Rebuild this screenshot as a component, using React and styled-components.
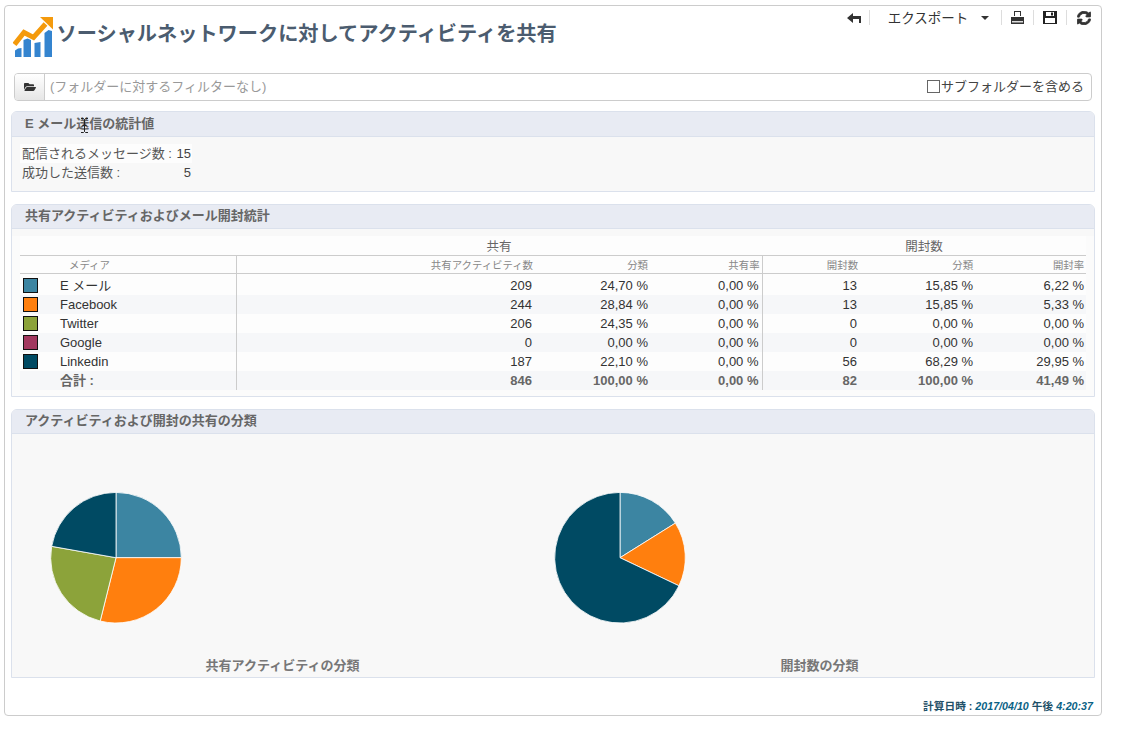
import React from 'react';
import styled, { createGlobalStyle } from 'styled-components';
import { FaFolderOpen, FaSyncAlt } from 'react-icons/fa';

const GlobalStyle = createGlobalStyle`
  html, body {
    margin: 0;
    background: #fff;
    font-family: "Liberation Sans", "Noto Sans CJK JP", sans-serif;
    font-size: 13px;
    color: #444;
  }
`;

const Page = styled.div`
  width: 1128px;
  height: 740px;
  padding: 5px 0 0 4px;
  box-sizing: border-box;
`;

const Card = styled.div`
  width: 1098px;
  height: 711px;
  box-sizing: border-box;
  border: 1px solid #ccc;
  border-radius: 4px;
  padding: 11px 6px 0 6px;
  display: flex;
  flex-direction: column;
  position: relative;
`;

const Header = styled.div`
  height: 56px;
  display: flex;
  align-items: flex-start;
  padding-left: 2px;
`;

const Title = styled.h1`
  margin: 4px 0 0 3.5px;
  font-size: 20.2px;
  line-height: 26px;
  font-weight: bold;
  color: #4b5c6f;
`;

const Toolbar = styled.div`
  position: absolute;
  top: 3px;
  right: 0;
  display: flex;
  align-items: center;
  height: 17px;
  color: #333;
`;

const ToolButton = styled.div`
  display: flex;
  align-items: center;
  justify-content: center;
  height: 15px;
  width: ${(p) => p.$w}px;
  box-sizing: border-box;
  border-right: ${(p) => (p.$last ? 'none' : '1px solid #ddd')};
`;

const ExportButton = styled(ToolButton)`
  padding: 0 0 2px 6px;
  font-size: 13.5px;
`;

const Caret = styled.span`
  width: 0;
  height: 0;
  margin: 2px 0 0 13px;
  border-left: 4px solid transparent;
  border-right: 4px solid transparent;
  border-top: 4px solid #333;
`;

const FilterBar = styled.div`
  margin-left: 3px;
  width: 1078px;
  height: 28px;
  box-sizing: border-box;
  border: 1px solid #ccc;
  border-radius: 4px;
  display: flex;
  align-items: center;
  font-size: 13px;
`;

const FolderButton = styled.div`
  width: 29px;
  height: 26px;
  flex: none;
  display: flex;
  align-items: center;
  justify-content: center;
  background: linear-gradient(#fff, #e6e6e6);
  border-right: 1px solid #ccc;
  border-radius: 3px 0 0 3px;
  color: #333;
  font-size: 12px;
`;

const FilterText = styled.span`
  flex: 1;
  padding: 0 0 3px 5px;
  color: #999;
`;

const Subfolder = styled.label`
  display: flex;
  align-items: center;
  padding: 0 7px 3px 0;
  color: #444;
`;

const Checkbox = styled.span`
  width: 11px;
  height: 11px;
  margin: 1px 1px 0 0;
  border: 1px solid #666;
  background: #fff;
`;

const Panel = styled.section`
  width: 1084px;
  margin-top: ${(p) => p.$top}px;
  box-sizing: border-box;
  border: 1px solid #dbe1ec;
  border-radius: 6px 6px 0 0;
  background: #f8f8f8;
  display: flex;
  flex-direction: column;
`;

const PanelTitle = styled.h2`
  margin: 0;
  height: ${(p) => p.$h || 24}px;
  flex: none;
  box-sizing: border-box;
  padding-left: 13px;
  background: #e8ebf3;
  border-bottom: 1px solid #dbe1ec;
  border-radius: 5px 5px 0 0;
  font-size: 13px;
  line-height: ${(p) => (p.$h || 24) - 2}px;
  font-weight: bold;
  color: #666;
`;

const TextCursor = styled.svg`
  position: absolute;
  left: 76px;
  top: 112px;
`;

const Stats = styled.dl`
  margin: 7px 0 9px 8px;
  width: 172px;
  display: grid;
  grid-template-columns: 1fr auto;
  grid-auto-rows: 19px;
  line-height: 19px;
  color: #555;
`;

const StatLabel = styled.dt`
  margin: 0;
  padding-left: 2px;
  background: ${(p) => (p.$hl ? '#fdfdfd' : 'transparent')};
`;

const StatValue = styled.dd`
  margin: 0;
  padding-right: 1px;
  text-align: right;
  color: #444;
  background: ${(p) => (p.$hl ? '#fdfdfd' : 'transparent')};
`;

const TableWrap = styled.div`
  padding: 7px 8px 6px 8px;
  background: linear-gradient(#f8f8f8 7px, #fbfbfb 7px);
`;

const Table = styled.table`
  width: 1066px;
  border-collapse: collapse;
  table-layout: fixed;
  background: #fdfdfd;
`;

const GroupCell = styled.th`
  height: 19px;
  padding: 0;
  font-size: 12.5px;
  font-weight: normal;
  color: #666;
  text-align: center;
  border-bottom: 1px solid #ccc;
  box-sizing: border-box;
`;

const ColHead = styled.th`
  height: 18px;
  padding: 0 ${(p) => p.$pad ?? 0}px 0 0;
  font-size: 10.4px;
  font-weight: normal;
  color: #888;
  text-align: ${(p) => p.$align || 'right'};
  border-bottom: 1px solid #ccc;
  border-right: ${(p) => (p.$rule ? '1px solid #ccc' : 'none')};
  box-sizing: border-box;
`;

const MediaHead = styled.span`
  margin-left: 49px;
`;

const Row = styled.tr`
  height: ${(p) => (p.$first ? 21 : 19)}px;
  background: ${(p) => (p.$alt ? '#f6f7f9' : '#fdfdfd')};
  color: ${(p) => (p.$total ? '#666' : '#333')};
  font-weight: ${(p) => (p.$total ? 'bold' : 'normal')};

  td {
    padding-top: ${(p) => (p.$first ? 3 : 0)}px;
  }
`;

const Cell = styled.td`
  padding: 0 ${(p) => p.$pad}px 0 0;
  text-align: right;
  font-size: 13px;
  line-height: 15px;
  border-right: ${(p) => (p.$rule ? '1px solid #ccc' : 'none')};
`;

const MediaCell = styled.td`
  padding: 0;
  border-right: 1px solid #ccc;
`;

const MediaInner = styled.div`
  display: flex;
  align-items: center;
  padding-left: 3px;
  font-size: 13px;
  line-height: 15px;
`;

const Swatch = styled.span`
  width: 13px;
  height: 13px;
  flex: none;
  border: 1px solid #111;
  background: ${(p) => p.$color};
  visibility: ${(p) => (p.$color ? 'visible' : 'hidden')};
`;

const MediaName = styled.span`
  margin-left: 22px;
`;

const Charts = styled.div`
  height: 243px;
  display: grid;
  grid-template-columns: 541px 541px;
`;

const ChartBox = styled.figure`
  margin: 0;
  display: flex;
  flex-direction: column;
  padding-top: 58px;
`;

const PieWrap = styled.div`
  margin-left: ${(p) => p.$left}px;
  height: 132px;
  flex: none;
`;

const Caption = styled.figcaption`
  margin-top: auto;
  margin-left: ${(p) => p.$shift}px;
  padding-bottom: 3px;
  text-align: center;
  font-size: 13px;
  line-height: 16px;
  font-weight: bold;
  color: #777;
`;

const Footer = styled.div`
  margin-top: 21px;
  width: 1082px;
  text-align: right;
  font-size: 10.7px;
  line-height: 14px;
  font-weight: bold;
  color: #1f5068;
`;

const FooterDate = styled.i`
  color: #0a6285;
`;

const COLORS = ['#3c85a2', '#ff7f0e', '#8ca33a', '#a1375f', '#004a63'];

const ROWS = [
  ['E メール', '209', '24,70 %', '0,00 %', '13', '15,85 %', '6,22 %'],
  ['Facebook', '244', '28,84 %', '0,00 %', '13', '15,85 %', '5,33 %'],
  ['Twitter', '206', '24,35 %', '0,00 %', '0', '0,00 %', '0,00 %'],
  ['Google', '0', '0,00 %', '0,00 %', '0', '0,00 %', '0,00 %'],
  ['Linkedin', '187', '22,10 %', '0,00 %', '56', '68,29 %', '29,95 %'],
];

const CELL_PADS = [1, 1, 3, 1, 1, 2];

// slice sizes in degrees, as drawn in the chart
const Pie = ({ degrees }) => {
  const r = 65.3;
  let angle = 0;
  return (
    <svg width="132" height="132" viewBox="-66 -65.7 132 132">
      {degrees.map((deg, i) => {
        if (!deg) return null;
        const start = (angle * Math.PI) / 180;
        angle += deg;
        const end = (angle * Math.PI) / 180;
        const large = deg > 180 ? 1 : 0;
        const d = `M0 0 L${r * Math.sin(start)} ${-r * Math.cos(start)} A${r} ${r} 0 ${large} 1 ${r * Math.sin(end)} ${-r * Math.cos(end)} Z`;
        return <path key={i} d={d} fill={COLORS[i]} stroke="#fff" strokeWidth="0.8" />;
      })}
    </svg>
  );
};

const Logo = () => (
  <svg width="40" height="41" viewBox="0 0 40 41">
    <g fill="#3484cf">
      <path d="M2 33.500l3-2 3.500-.5V40H2z" />
      <path d="M10.500 23l4-1.500 3.500 1.500V40h-7.500z" />
      <path d="M21.500 26l6-1V40h-6z" />
      <path d="M31.500 16l4-3 3.500 1V40h-7.500z" />
    </g>
    <path d="M1.500 27.500L11 15.500l9.500 5L32.500 7" fill="none" stroke="#f49a0c" strokeWidth="5" />
    <path d="M27 0H40V12.500z" fill="#f49a0c" />
  </svg>
);

const BackIcon = () => (
  <svg width="14" height="10" viewBox="0 0 14 10">
    <path d="M0 5L6 0v3h8v7h-2V6H6v4z" fill="#333" />
  </svg>
);

const PrintIcon = () => (
  <svg width="13" height="13" viewBox="0 0 13 13">
    <path d="M3 0h7v5H9V1H4v4H3z M0 6h13v7H0z" fill="#333" />
    <path d="M1 10h11v1.500H1z" fill="#ddd" />
  </svg>
);

const SaveIcon = () => (
  <svg width="14" height="13" viewBox="0 0 14 13">
    <path fillRule="evenodd" d="M0 0h14v13H0z M3 1v4h8V1z M2 7v5h10V7z" fill="#222" />
    <path d="M8 1.500h2v3H8z" fill="#222" />
  </svg>
);

export default function App() {
  return (
    <Page>
      <GlobalStyle />
      <Card>
        <Toolbar>
          <ToolButton $w={32}><BackIcon /></ToolButton>
          <ExportButton $w={132}>エクスポート<Caret /></ExportButton>
          <ToolButton $w={32}><PrintIcon /></ToolButton>
          <ToolButton $w={33}><SaveIcon /></ToolButton>
          <ToolButton $w={34} $last><FaSyncAlt size={14} stroke="currentColor" strokeWidth={30} /></ToolButton>
        </Toolbar>
        <Header>
          <Logo />
          <Title>ソーシャルネットワークに対してアクティビティを共有</Title>
        </Header>
        <FilterBar>
          <FolderButton><FaFolderOpen /></FolderButton>
          <FilterText>(フォルダーに対するフィルターなし)</FilterText>
          <Subfolder><Checkbox />サブフォルダーを含める</Subfolder>
        </FilterBar>
        <Panel $top={10}>
          <PanelTitle $h={25}>E メール送信の統計値</PanelTitle>
          <Stats>
            <StatLabel $hl>配信されるメッセージ数 :</StatLabel>
            <StatValue $hl>15</StatValue>
            <StatLabel>成功した送信数 :</StatLabel>
            <StatValue>5</StatValue>
          </Stats>
        </Panel>
        <TextCursor width="7" height="15" viewBox="0 0 7 15">
          <path d="M0 .5h2.500l1 1 1-1H7M3.500 1.500v12M0 14.500h2.500l1-1 1 1H7M1.500 7.500h4" fill="none" stroke="#222" />
        </TextCursor>
        <Panel $top={12}>
          <PanelTitle>共有アクティビティおよびメール開封統計</PanelTitle>
          <TableWrap>
            <Table>
              <colgroup>
                <col width="216" />
                <col width="297" />
                <col width="116" />
                <col width="113" />
                <col width="96" />
                <col width="116" />
                <col width="112" />
              </colgroup>
              <thead>
                <tr>
                  <GroupCell />
                  <GroupCell colSpan={3}>共有</GroupCell>
                  <GroupCell colSpan={3}>開封数</GroupCell>
                </tr>
                <tr>
                  <ColHead $align="left" $rule><MediaHead>メディア</MediaHead></ColHead>
                  <ColHead>共有アクティビティ数</ColHead>
                  <ColHead $pad={1}>分類</ColHead>
                  <ColHead $pad={2} $rule>共有率</ColHead>
                  <ColHead>開封数</ColHead>
                  <ColHead $pad={1}>分類</ColHead>
                  <ColHead $pad={2}>開封率</ColHead>
                </tr>
              </thead>
              <tbody>
                {ROWS.map((row, i) => (
                  <Row key={row[0]} $alt={i % 2 === 1} $first={i === 0}>
                    <MediaCell>
                      <MediaInner>
                        <Swatch $color={COLORS[i]} />
                        <MediaName>{row[0]}</MediaName>
                      </MediaInner>
                    </MediaCell>
                    {row.slice(1).map((v, j) => (
                      <Cell key={j} $pad={CELL_PADS[j]} $rule={j === 2}>{v}</Cell>
                    ))}
                  </Row>
                ))}
                <Row $alt $total>
                  <MediaCell>
                    <MediaInner>
                      <Swatch />
                      <MediaName>合計 :</MediaName>
                    </MediaInner>
                  </MediaCell>
                  {['846', '100,00 %', '0,00 %', '82', '100,00 %', '41,49 %'].map((v, j) => (
                    <Cell key={j} $pad={CELL_PADS[j]} $rule={j === 2}>{v}</Cell>
                  ))}
                </Row>
              </tbody>
            </Table>
          </TableWrap>
        </Panel>
        <Panel $top={12}>
          <PanelTitle>アクティビティおよび開封の共有の分類</PanelTitle>
          <Charts>
            <ChartBox>
              <PieWrap $left={38}><Pie degrees={[90, 104, 86, 0, 80]} /></PieWrap>
              <Caption $shift={0}>共有アクティビティの分類</Caption>
            </ChartBox>
            <ChartBox>
              <PieWrap $left={1}><Pie degrees={[58, 57.5, 0, 0, 244.5]} /></PieWrap>
              <Caption $shift={-8}>開封数の分類</Caption>
            </ChartBox>
          </Charts>
        </Panel>
        <Footer>計算日時 : <FooterDate>2017/04/10 </FooterDate>午後 <FooterDate>4:20:37</FooterDate></Footer>
      </Card>
    </Page>
  );
}
